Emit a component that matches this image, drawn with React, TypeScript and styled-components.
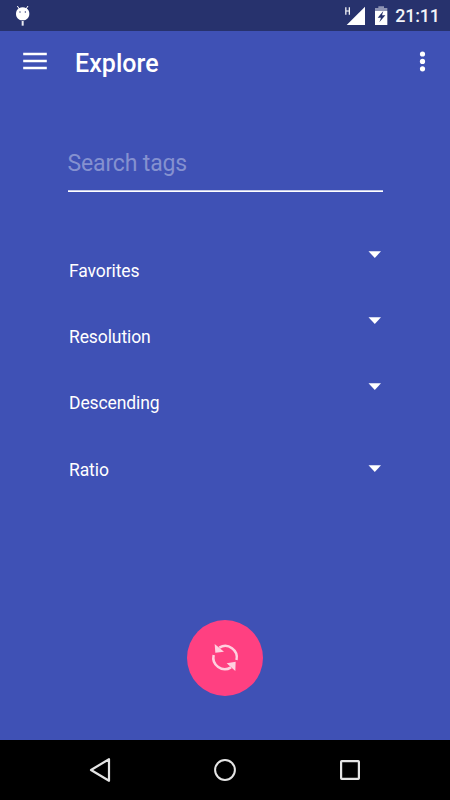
import React from 'react';
import styled, { createGlobalStyle } from 'styled-components';

const GlobalStyle = createGlobalStyle`
  *, *::before, *::after { box-sizing: border-box; }
  body { margin: 0; background: #3f51b5; }
  svg { display: block; flex: none; }
`;

const Screen = styled.div`
  display: flex;
  flex-direction: column;
  width: 450px;
  height: 800px;
  overflow: hidden;
  background: #3f51b5;
  color: #fff;
  font-family: Roboto, 'Liberation Sans', sans-serif;
`;

const StatusBar = styled.header`
  display: flex;
  flex: none;
  align-items: flex-start;
  justify-content: space-between;
  height: 31px;
  padding-left: 14px;
  background: #27326d;
`;

const StatusGroup = styled.div`
  display: flex;
`;

const Clock = styled.time`
  width: 56px;
  padding: 5px 0 0 1.3px;
  font-size: 17.9px;
  font-weight: 500;
  letter-spacing: -.2px;
  line-height: 22px;
  color: #f3f4f8;
`;

const Toolbar = styled.nav`
  display: flex;
  flex: none;
  align-items: center;
  height: 63px;
  padding: 0 17px 2px 23px;
`;

const IconButton = styled.button`
  display: flex;
  padding: 0;
  border: 0;
  background: none;
  color: inherit;
`;

const Title = styled.h1`
  flex: 1;
  margin: 4px 0 0 28px;
  font-size: 25px;
  font-weight: 500;
  letter-spacing: .05px;
  line-height: 30px;
`;

const Content = styled.main`
  display: flex;
  flex: 1;
  flex-direction: column;
  padding: 54px 67px 0;
`;

const SearchInput = styled.input`
  display: block;
  width: 316px;
  height: 44px;
  padding: 0 0 14px .5px;
  border: 0;
  border-radius: 0;
  outline: 0;
  background: linear-gradient(#c5cbe8 50%, #fff 50%) center bottom / 315px 2px no-repeat;
  color: #fff;
  font: 400 23px/30px Roboto, 'Liberation Sans', sans-serif;
  letter-spacing: -.15px;
  &::placeholder { color: #8591d0; opacity: 1; }
`;

const OptionList = styled.div`
  display: flex;
  flex-direction: column;
  margin-top: 46px;
`;

const Option = styled.div<{ $raised: boolean }>`
  display: flex;
  align-items: center;
  justify-content: space-between;
  height: 66.2px;
  padding: 0 2px;
  font-size: 17.5px;
  letter-spacing: -.1px;
  line-height: 22px;
  svg { margin-bottom: ${(p) => (p.$raised ? 33 : 3)}px; }
`;

const RefreshButton = styled.button`
  align-self: center;
  width: 76px;
  height: 76px;
  margin-top: 117px;
  padding: 0;
  border: 0;
  border-radius: 50%;
  background: #ff4081;
`;

const NavigationBar = styled.footer`
  display: flex;
  flex: none;
  align-items: center;
  justify-content: space-between;
  height: 60px;
  padding: 0 87px;
  background: #000;
`;

const options = [
  { label: 'Favorites', raised: true },
  { label: 'Resolution', raised: true },
  { label: 'Descending', raised: true },
  { label: 'Ratio', raised: false },
];

const DebugIcon = () => (
  <svg width="18" height="31" viewBox="0 0 54 93">
    <path d="M10 18l6 9M42 18l-6 9" stroke="#fff" strokeWidth="3" />
    <path d="M15 25c7-4 15-4 22 0 6 3 9 9 9 16 0 12-8 20-20 20S6 53 6 41c0-7 3-13 9-16z" fill="#fff" />
    <circle cx="18" cy="36" r="2" fill="#27326d" />
    <circle cx="34" cy="36" r="2" fill="#27326d" />
    <path d="M26 63v14" stroke="#e8eaf1" strokeWidth="6" />
  </svg>
);

const SignalIcon = () => (
  <svg width="30" height="31" viewBox="0 0 90 93">
    <path d="M17.500 22v22M28 22v22M17 33h11" stroke="#fff" strokeWidth="3.6" />
    <path d="M75 20v55H20z" fill="#fff" />
  </svg>
);

const BatteryIcon = () => (
  <svg width="24" height="31" viewBox="0 0 72 93">
    <path d="M15 33v-9h10v-5h17v5h10v9z" fill="#8e94b4" />
    <path d="M15 33h37v42H15z" fill="#fff" />
    <path d="M40 33L23 53h10l-5 14 18-21H36z" fill="#27326d" />
  </svg>
);

const MenuIcon = () => (
  <svg width="24" height="20" viewBox="0 0 24 20">
    <path d="M.2 1.900h23.600M.2 9h23.600M.2 16h23.600" stroke="#fff" strokeWidth="2.500" />
  </svg>
);

const MoreIcon = () => (
  <svg width="21" height="21" viewBox="0 0 21 21" fill="#fff">
    <circle cx="10.5" cy="3" r="2.6" />
    <circle cx="10.5" cy="10.4" r="2.6" />
    <circle cx="10.5" cy="17.8" r="2.6" />
  </svg>
);

const CaretIcon = () => (
  <svg width="13" height="7" viewBox="0 0 13 7">
    <path d="M.5.2h12.500L6.800 7z" fill="#fff" />
  </svg>
);

const RefreshIcon = () => (
  <svg width="76" height="76" viewBox="0 0 76 76">
    <g transform="translate(-7 -10) scale(.33333)" fill="none" stroke="#ffd0df">
      <path d="M118 113A34.500 34.500 0 0 1 169.500 150" strokeWidth="7.500" />
      <path d="M101 135A34.500 34.500 0 0 0 153 172" strokeWidth="7.500" />
      <path d="M104 102l2 26 26-3zM167 155l-27 5 26 23z" fill="#ffd0df" stroke="none" />
    </g>
  </svg>
);

const BackIcon = () => (
  <svg width="26" height="26" viewBox="0 0 26 26">
    <path d="M22 2.200v21.600L4 13z" fill="none" stroke="#e5e5e5" strokeWidth="2.2" strokeLinejoin="round" />
  </svg>
);

const HomeIcon = () => (
  <svg width="26" height="26" viewBox="0 0 26 26">
    <circle cx="13" cy="13" r="9.900" fill="none" stroke="#e5e5e5" strokeWidth="2" />
  </svg>
);

const RecentIcon = () => (
  <svg width="26" height="26" viewBox="0 0 26 26">
    <rect x="4.100" y="4.100" width="17.800" height="17.800" rx=".6" fill="none" stroke="#e5e5e5" strokeWidth="2.2" />
  </svg>
);

export default function App() {
  return (
    <>
      <GlobalStyle />
      <Screen>
        <StatusBar>
          <DebugIcon />
          <StatusGroup>
            <SignalIcon />
            <BatteryIcon />
            <Clock>21:11</Clock>
          </StatusGroup>
        </StatusBar>
        <Toolbar>
          <IconButton aria-label="Menu"><MenuIcon /></IconButton>
          <Title>Explore</Title>
          <IconButton aria-label="More"><MoreIcon /></IconButton>
        </Toolbar>
        <Content>
          <SearchInput placeholder="Search tags" />
          <OptionList>
            {options.map(({ label, raised }) => (
              <Option key={label} $raised={raised}>
                <span>{label}</span>
                <CaretIcon />
              </Option>
            ))}
          </OptionList>
          <RefreshButton aria-label="Refresh"><RefreshIcon /></RefreshButton>
        </Content>
        <NavigationBar>
          <IconButton aria-label="Back"><BackIcon /></IconButton>
          <IconButton aria-label="Home"><HomeIcon /></IconButton>
          <IconButton aria-label="Recent apps"><RecentIcon /></IconButton>
        </NavigationBar>
      </Screen>
    </>
  );
}
